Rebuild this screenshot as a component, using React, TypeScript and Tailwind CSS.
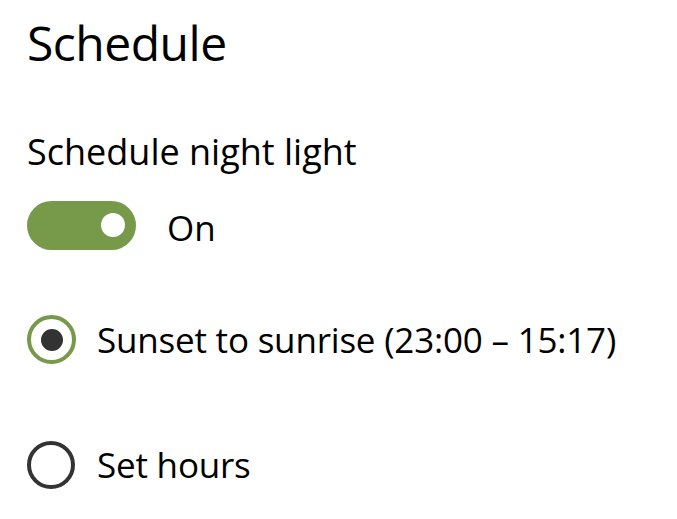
export default function App() {
  return (
    <div className="w-[677px] h-[519px] bg-white text-black overflow-hidden" style={{ fontFamily: '"Open Sans", "Noto Sans", sans-serif' }}>
      <div className="pl-[27px] pt-[11px] flex flex-col">
        <div className="text-[48px] leading-[64px] h-[64px] tracking-[-0.5px]">Schedule</div>
        <div className="mt-[55px] text-[36px] leading-[44px] h-[44px] tracking-[0px]">Schedule night light</div>
        <div className="mt-[26px] flex items-center">
          <div className="w-[109px] h-[49px] rounded-full bg-[#77994a] flex items-center justify-end pr-[11px]">
            <div className="w-[24px] h-[24px] rounded-full bg-white" />
          </div>
          <div className="ml-[31px] mt-[6px] text-[35px] leading-[44px]">On</div>
        </div>
        <div className="mt-[65px] flex items-center">
          <div className="w-[49px] h-[49px] rounded-full border-[4px] border-[#77994a] flex items-center justify-center">
            <div className="w-[22px] h-[22px] rounded-full bg-[#333333]" />
          </div>
          <div className="ml-[21px] text-[35px] leading-[44px] tracking-[-0.2px]">Sunset to sunrise (23:00 – 15:17)</div>
        </div>
        <div className="mt-[77px] flex items-center">
          <div className="w-[48px] h-[48px] rounded-full border-[4px] border-[#333333]" />
          <div className="ml-[22px] text-[35px] leading-[44px] tracking-[-0.2px]">Set hours</div>
        </div>
      </div>
    </div>
  );
}
